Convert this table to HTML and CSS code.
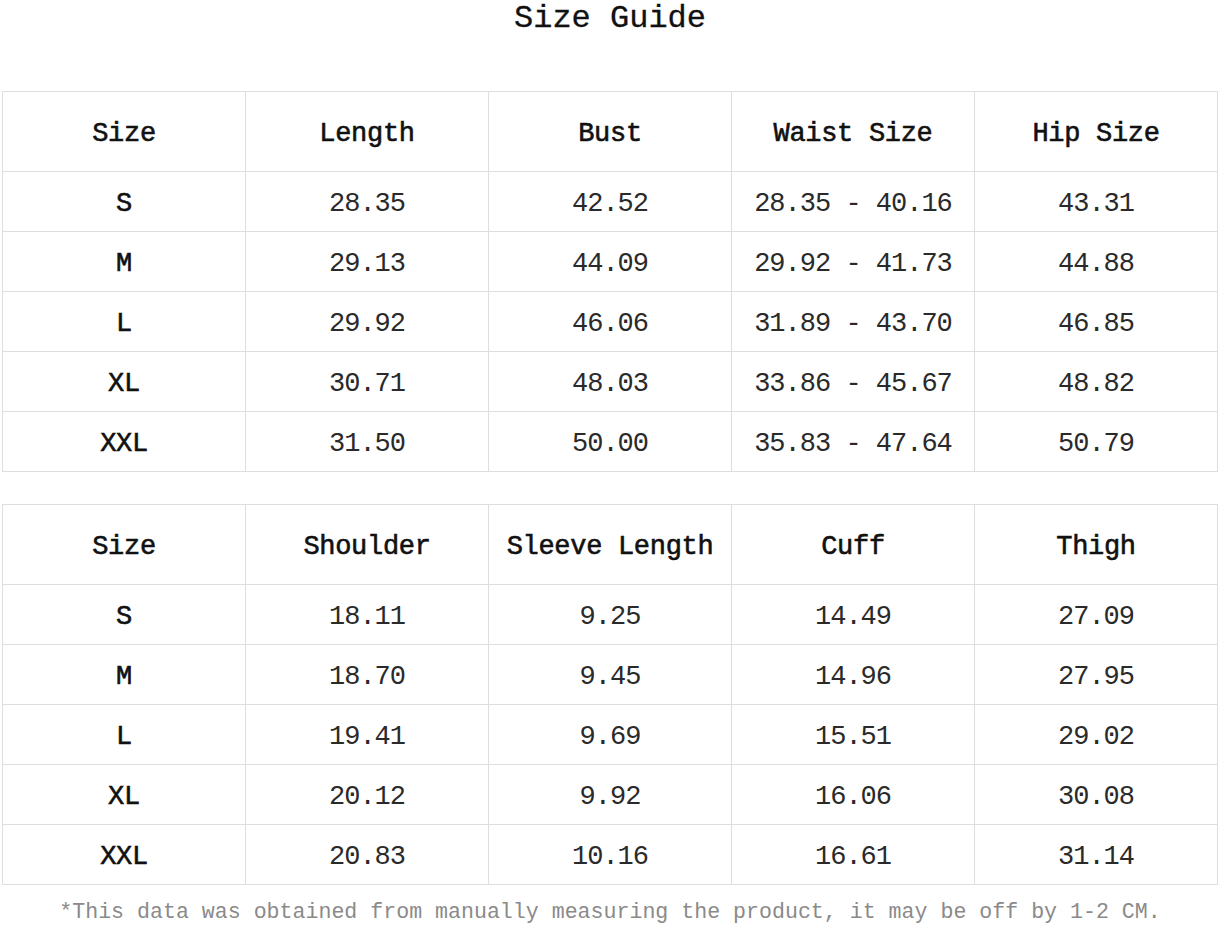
FILE: index.html
```html
<!DOCTYPE html>
<html>
<head>
<meta charset="utf-8">
<link rel="stylesheet" href="styles.css">
</head>
<body>
<div class="page">
  <h1 class="title">Size Guide</h1>
  <table class="size-table">
    <thead>
      <tr><th>Size</th><th>Length</th><th>Bust</th><th>Waist Size</th><th>Hip Size</th></tr>
    </thead>
    <tbody>
      <tr><th>S</th><td>28.35</td><td>42.52</td><td>28.35 - 40.16</td><td>43.31</td></tr>
      <tr><th>M</th><td>29.13</td><td>44.09</td><td>29.92 - 41.73</td><td>44.88</td></tr>
      <tr><th>L</th><td>29.92</td><td>46.06</td><td>31.89 - 43.70</td><td>46.85</td></tr>
      <tr><th>XL</th><td>30.71</td><td>48.03</td><td>33.86 - 45.67</td><td>48.82</td></tr>
      <tr><th>XXL</th><td>31.50</td><td>50.00</td><td>35.83 - 47.64</td><td>50.79</td></tr>
    </tbody>
  </table>
  <table class="size-table second">
    <thead>
      <tr><th>Size</th><th>Shoulder</th><th>Sleeve Length</th><th>Cuff</th><th>Thigh</th></tr>
    </thead>
    <tbody>
      <tr><th>S</th><td>18.11</td><td>9.25</td><td>14.49</td><td>27.09</td></tr>
      <tr><th>M</th><td>18.70</td><td>9.45</td><td>14.96</td><td>27.95</td></tr>
      <tr><th>L</th><td>19.41</td><td>9.69</td><td>15.51</td><td>29.02</td></tr>
      <tr><th>XL</th><td>20.12</td><td>9.92</td><td>16.06</td><td>30.08</td></tr>
      <tr><th>XXL</th><td>20.83</td><td>10.16</td><td>16.61</td><td>31.14</td></tr>
    </tbody>
  </table>
  <p class="note">*This data was obtained from manually measuring the product, it may be off by 1-2 CM.</p>
</div>
</body>
</html>
```
FILE: styles.css
```css
html, body {
  margin: 0;
  padding: 0;
  background: #ffffff;
}
body {
  font-family: "Liberation Mono", "DejaVu Sans Mono", monospace;
  color: #1a1a1a;
}
.page {
  padding: 0 2px;
  width: 1216px;
}
.title {
  margin: 0 0 55px 0;
  padding-top: 2px;
  height: 34px;
  line-height: 34px;
  font-size: 32px;
  font-weight: normal;
  text-align: center;
  color: #111111;
  -webkit-text-stroke: 0.3px #111111;
}
.size-table {
  width: 1216px;
  table-layout: fixed;
  border-collapse: collapse;
}
.size-table.second {
  margin-top: 32px;
}
.size-table th,
.size-table td {
  border: 1px solid #dedede;
  text-align: center;
  padding: 4px 0 0 0;
  height: 55px;
  font-size: 27px;
  letter-spacing: -1px;
  font-weight: normal;
  color: #2a2a2a;
}
.size-table thead th {
  height: 75px;
  font-size: 27px;
  letter-spacing: -0.3px;
  color: #111111;
  -webkit-text-stroke: 0.6px #111111;
}
.size-table tbody th {
  color: #111111;
  letter-spacing: -0.3px;
  -webkit-text-stroke: 0.6px #111111;
}
.note {
  margin: 14px 0 0 0;
  font-size: 21.6px;
  line-height: 26px;
  text-align: center;
  color: #8a8a8a;
}
```
